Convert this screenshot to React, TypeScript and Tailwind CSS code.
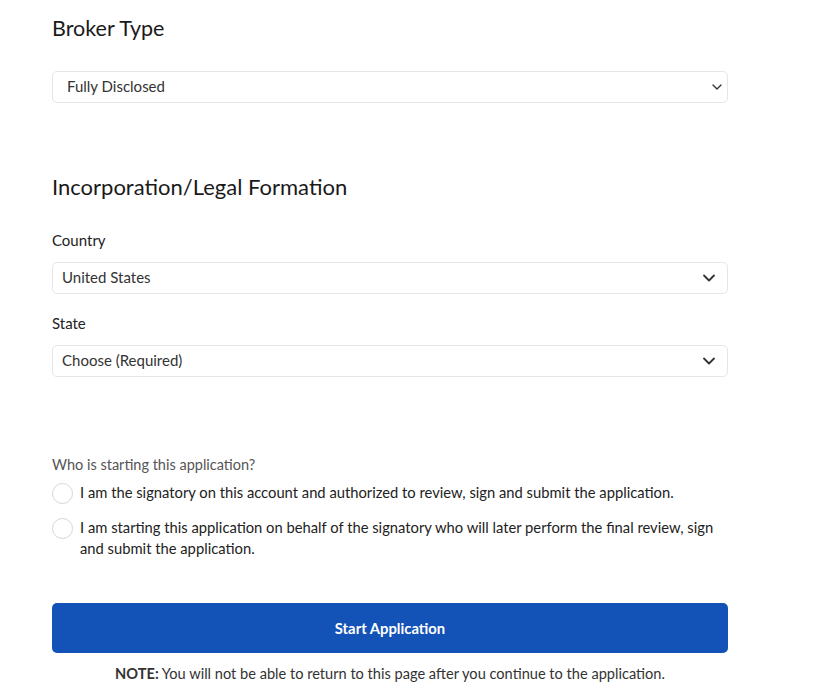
import { ChevronDown } from "lucide-react";

function SelectBox({ value, small }: { value: string; small?: boolean }) {
  return (
    <div
      className={`flex h-[32px] items-center justify-between rounded-[5px] border border-[#e6e6e6] bg-white ${
        small ? "pl-[14px] pr-[2px]" : "pl-[9px] pr-[8px]"
      }`}
    >
      <span className="-mt-[2px] text-[15px] leading-[20px] text-[#333]">{value}</span>
      {small ? (
        <ChevronDown size={16} strokeWidth={2} className="text-[#333]" />
      ) : (
        <ChevronDown size={20} strokeWidth={2.2} className="text-[#333]" />
      )}
    </div>
  );
}

function Radio({ children }: { children: React.ReactNode }) {
  return (
    <label className="flex items-start gap-[7px]">
      <span className="h-[21px] w-[21px] shrink-0 rounded-full border border-[#d6d6d6] bg-white" />
      <span className="-mt-[1px] text-[14.75px] leading-[21px] text-[#222]">{children}</span>
    </label>
  );
}

export default function App() {
  return (
    <main className="min-h-screen bg-white font-['Lato',sans-serif]">
      <div className="w-[676px] ml-[52px] pt-[14px]">
        <h2 className="text-[21.5px] leading-[28px] text-[#1a1a1a]">Broker Type</h2>
        <div className="mt-[29px]">
          <SelectBox value="Fully Disclosed" small />
        </div>

        <h2 className="mt-[70px] text-[22px] leading-[28px] text-[#1a1a1a]">
          Incorporation/Legal Formation
        </h2>

        <div className="mt-[29px] text-[15px] leading-[20px] text-[#222]">Country</div>
        <div className="mt-[12px]">
          <SelectBox value="United States" />
        </div>

        <div className="mt-[19px] text-[15px] leading-[20px] text-[#222]">State</div>
        <div className="mt-[12px]">
          <SelectBox value="Choose (Required)" />
        </div>

        <div className="mt-[78px] text-[14.5px] leading-[20px] text-[#555]">
          Who is starting this application?
        </div>
        <div className="mt-[8px] flex flex-col gap-[14px]">
          <Radio>
            I am the signatory on this account and authorized to review, sign and submit the application.
          </Radio>
          <Radio>
            I am starting this application on behalf of the signatory who will later perform the final review, sign
            and submit the application.
          </Radio>
        </div>

        <button
          type="button"
          className="mt-[44px] h-[50px] w-full rounded-[5px] bg-[#1352b6] text-[14.8px] font-bold text-white"
        >
          Start Application
        </button>
        <p className="mt-[11px] text-center text-[14.6px] leading-[20px] text-[#333]">
          <span className="font-bold">NOTE:</span> You will not be able to return to this page after you continue to
          the application.
        </p>
      </div>
    </main>
  );
}
